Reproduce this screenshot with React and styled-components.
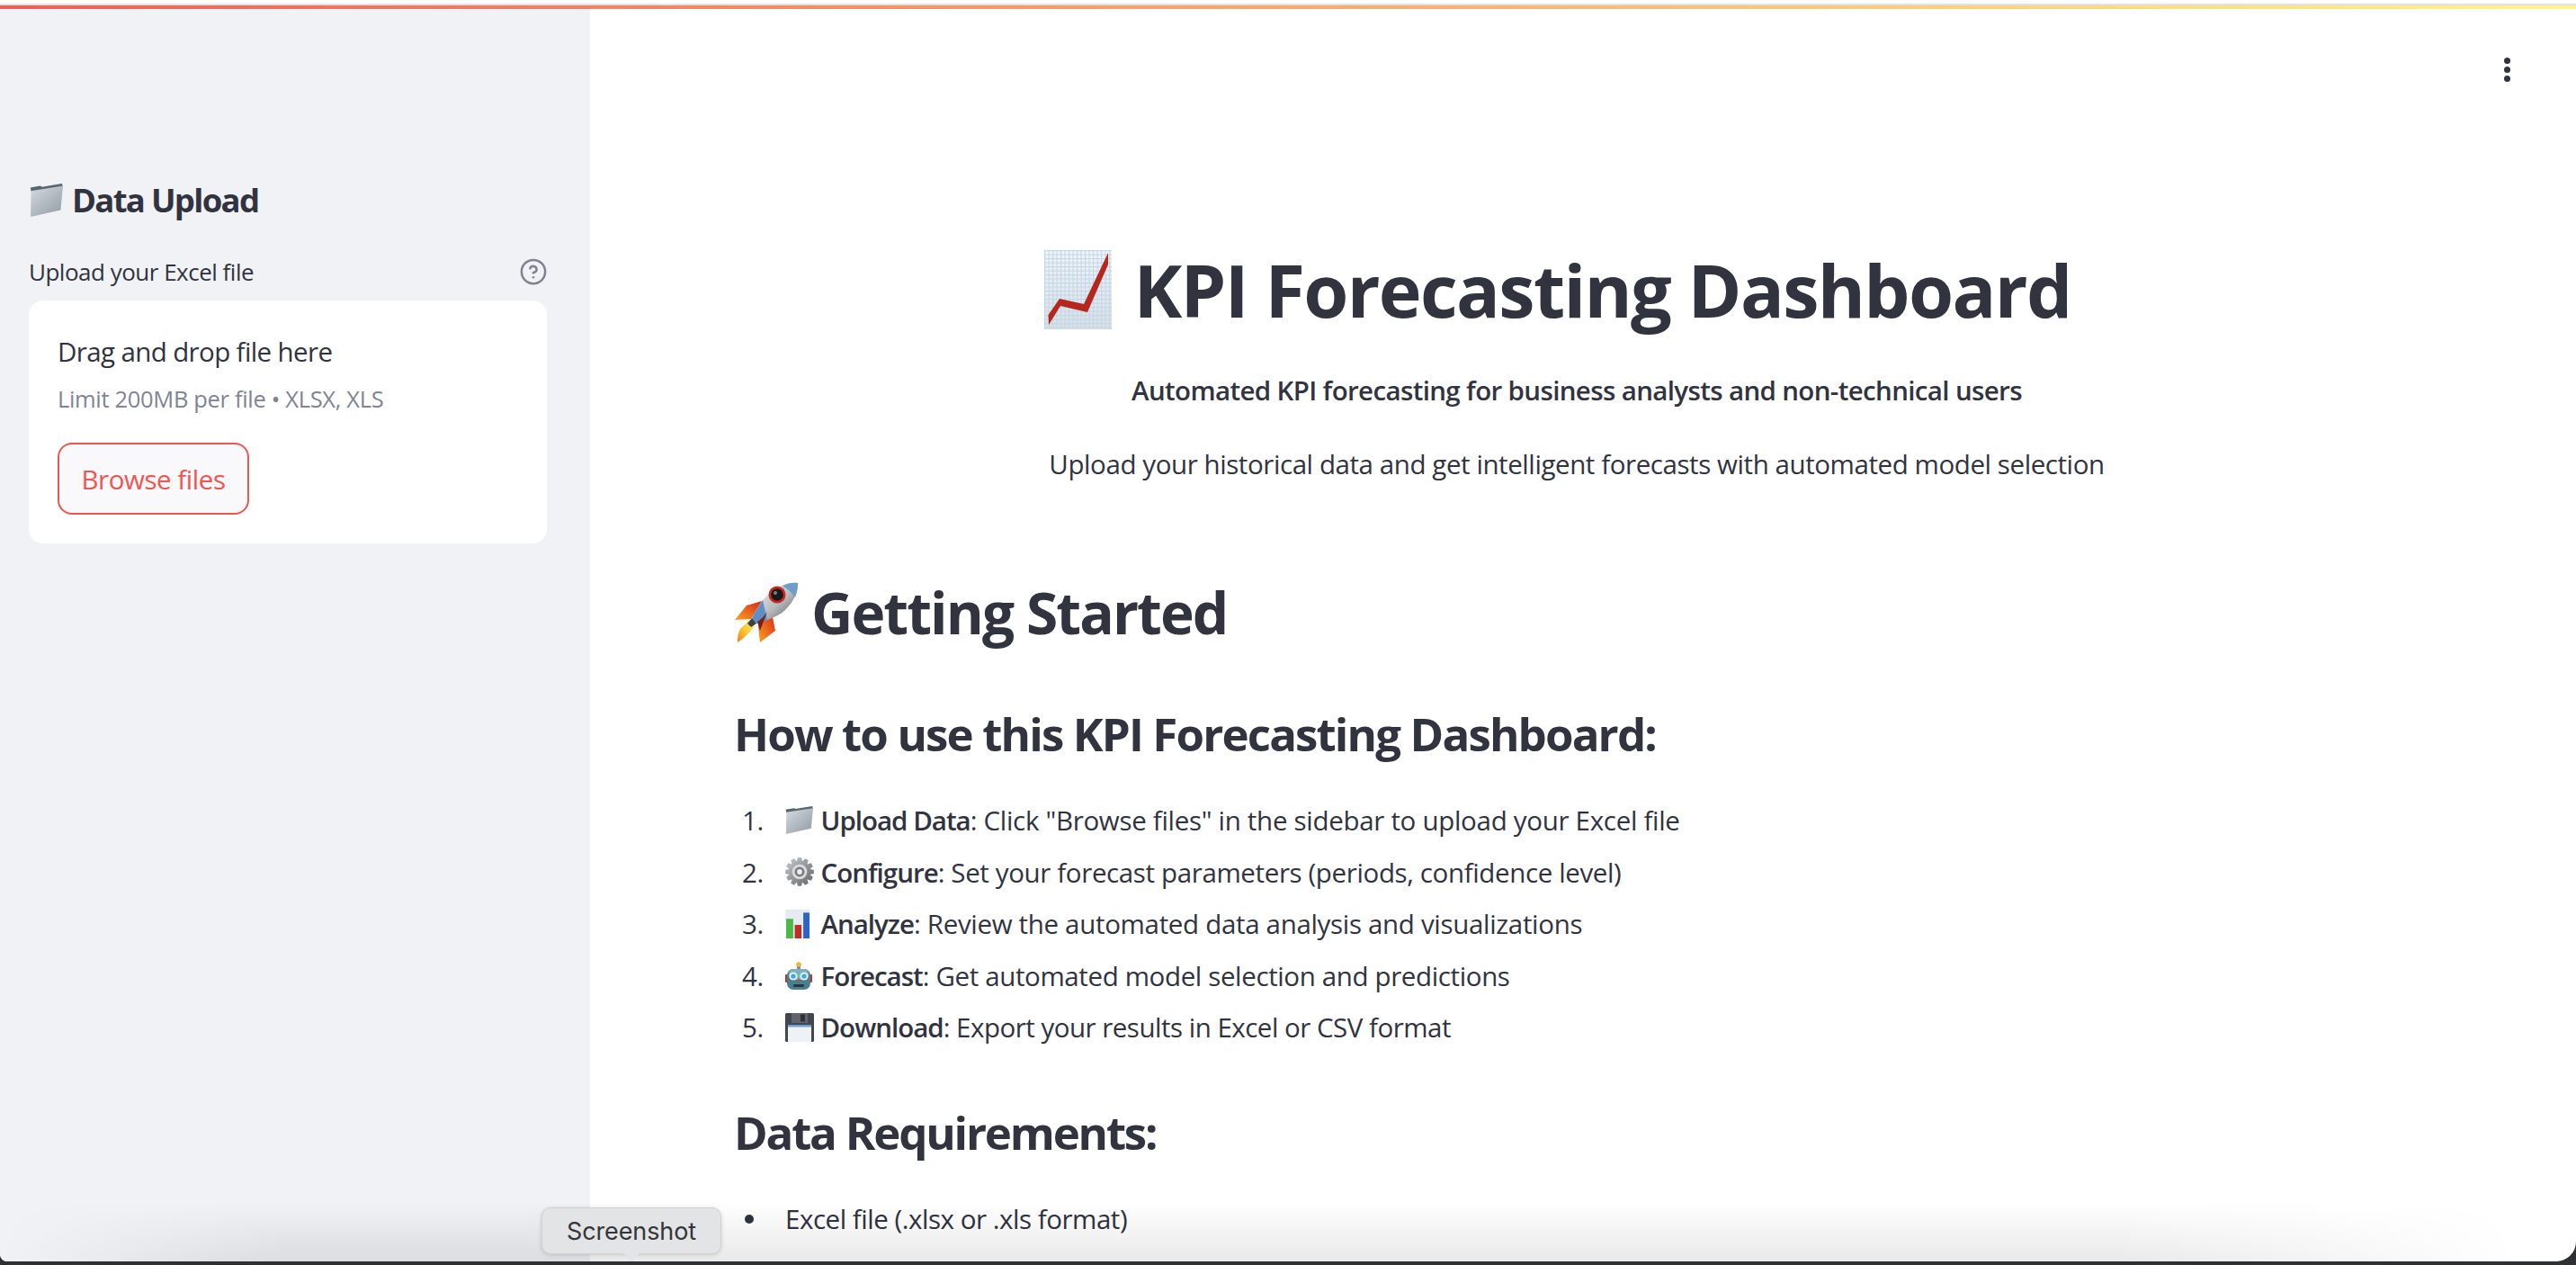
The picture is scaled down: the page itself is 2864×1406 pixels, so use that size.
import React from 'react';
import styled, { createGlobalStyle } from 'styled-components';

const Global = createGlobalStyle`
  html, body { margin: 0; padding: 0; height: 100%; background: #2f3034; overflow: hidden; }
  #root { height: 100%; }
  * { box-sizing: border-box; }
`;

const Screen = styled.div`
  position: relative; height: 1406px; width: 100%; background: #2f3034; overflow: hidden;
  font-family: "Open Sans", "Noto Sans", sans-serif; color: #31333f;
`;
const Frame = styled.div`
  position: relative; height: 1402px; background: #fff; overflow: hidden;
  border-bottom-right-radius: 22px; border-bottom-left-radius: 8px;
  display: flex; flex-direction: column;
`;
const TopEdge = styled.div`
  height: 6px; flex: none; background: #fff; border-bottom: 2px solid #e2e2e2;
`;
const Decoration = styled.div`
  height: 4px; flex: none;
  background: linear-gradient(90deg, #ee5f56, #f8a870 50%, #fff48c);
`;
const Body = styled.div`flex: 1; display: flex; min-height: 0;`;

const Sidebar = styled.aside`
  width: 656px; flex: none; background: #f0f2f6; padding: 187px 48px 0 32px;
`;
const SideHeading = styled.h2`
  margin: 0; display: flex; align-items: center; gap: 10px; height: 50px; padding-left: 1px;
  font-size: 36.5px; font-weight: 700; letter-spacing: -1.7px; line-height: 50px;
`;
const LabelRow = styled.div`
  margin-top: 40px; height: 30px; display: flex; justify-content: space-between; align-items: center;
`;
const Label = styled.label`font-size: 26px; letter-spacing: -0.5px; line-height: 30px;`;
const HelpIcon = styled.svg`width: 30px; height: 30px; color: #7f8391; display: block;`;
const DropZone = styled.section`
  margin-top: 17px; height: 270px; background: #fff; border-radius: 16px; padding: 37px 32px 0;
`;
const DropTitle = styled.div`font-size: 29.5px; letter-spacing: -0.62px; line-height: 40px;`;
const DropHint = styled.div`
  margin-top: 14px; font-size: 25.5px; letter-spacing: -0.33px; line-height: 36px; color: #808495;
`;
const BrowseButton = styled.button`
  margin-top: 31px; width: 213px; height: 80px; border: 2px solid #f1554f; border-radius: 16px;
  background: #f9f9fb; color: #f1554f; font: inherit; font-size: 29.5px; letter-spacing: -0.45px;
  display: flex; align-items: center; justify-content: center; padding: 0;
`;

const Main = styled.main`
  position: relative; flex: 1; min-width: 0; padding: 262px 174px 0 160px;
`;
const Dots = styled.div`
  position: absolute; top: 54px; left: 2128px; display: flex; flex-direction: column; gap: 3px;
`;
const Dot = styled.span`width: 7px; height: 7px; border-radius: 50%; background: #31333f;`;
const Title = styled.h1`
  margin: 0; height: 100px; display: flex; justify-content: center; align-items: center; gap: 24px;
  padding-right: 42px; font-size: 81px; font-weight: 700; letter-spacing: -1.65px; line-height: 100px;
  white-space: nowrap;
`;
const Lead = styled.p`
  margin: ${p => p.$bold ? 39.5 : 38}px 0 0; text-align: center; font-size: 29.5px; line-height: 44px;
  font-weight: ${p => p.$bold ? 600 : 400};
  letter-spacing: ${p => p.$bold ? '-0.64px' : '-0.42px'};
  white-space: nowrap;
`;
const SectionHeading = styled.h2`
  margin: 103px 0 0; height: 80px; display: flex; align-items: center; gap: 14px;
  font-size: 64px; font-weight: 700; letter-spacing: -1.9px; line-height: 80px;
`;
const SubHeading = styled.h3`
  margin: ${p => p.$top}px 0 0; height: 70px; font-size: 51px; font-weight: 700;
  letter-spacing: ${p => p.$ls}px; line-height: 70px; white-space: nowrap;
`;
const List = styled.ol`margin: 33.5px 0 0; padding: 0; list-style: none;`;
const Item = styled.li`
  height: 57.5px; display: flex; align-items: center; font-size: 29.5px;
  letter-spacing: ${p => p.$ls}px; white-space: nowrap;
`;
const Marker = styled.span`width: 57px; flex: none; padding-left: 9px;`;
const BulletDot = styled.span`
  width: 57px; flex: none; padding-left: 12px; display: flex;
  &::before { content: ""; width: 10px; height: 10px; border-radius: 50%; background: #31333f; }
`;
const EmojiSlot = styled.span`width: 39.5px; flex: none; display: flex; align-items: center;`;
const Strong = styled.strong`font-weight: 600; letter-spacing: -1px;`;

const Vignette = styled.div`
  position: absolute; left: 0; right: 0; bottom: 0; height: 66px; pointer-events: none;
  background: linear-gradient(180deg, rgba(0,0,0,0), rgba(0,0,0,.085));
  mask-image: linear-gradient(90deg, transparent 0, #000 320px, #000 2350px, transparent 2800px);
`;
const Tip = styled.div`
  position: absolute; left: 602px; top: 1342px; width: 200px; height: 52px; border-radius: 10px;
  background: #e3e4e5; border: 1px solid #cfd0d2; box-shadow: 0 1px 5px rgba(0,0,0,.14);
  display: flex; align-items: center; justify-content: center;
  font-family: Inter, sans-serif; font-size: 27px; letter-spacing: -0.1px; color: #33353a;
  &::after {
    content: ""; position: absolute; left: 90px; bottom: -9px; width: 0; height: 0;
    border-left: 9px solid transparent; border-right: 9px solid transparent; border-top: 9px solid #e3e4e5;
  }
`;
const EmojiSvg = styled.svg`display: block; flex: none; overflow: visible;`;

const ChartEmoji = () => (
  <EmojiSvg width="75" height="88" viewBox="0 0 75 88">
    <defs>
      <pattern id="chartGrid" width="4.5" height="4.5" patternUnits="userSpaceOnUse">
        <path d="M0 .5H4.5M.5 0V4.5" stroke="#c3d7e9" strokeWidth="1.3" fill="none" />
      </pattern>
      <linearGradient id="chartBg" x1="0" y1="0" x2="0" y2="1">
        <stop offset="0" stopColor="#f3f6f8" /><stop offset="1" stopColor="#d9dfe4" />
      </linearGradient>
    </defs>
    <rect width="75" height="88" fill="url(#chartBg)" />
    <rect width="75" height="88" fill="url(#chartGrid)" />
    <polygon points="4.5,72 17,54 44,60 71,3 71,16 48,69 18,62 5,83" fill="#b5261c" />
  </EmojiSvg>
);
const Rocket = () => (
  <EmojiSvg width="72" height="68" viewBox="0 0 72 68">
    <defs>
      <linearGradient id="rocketBody" x1="0.1" y1="0.1" x2="0.9" y2="0.9">
        <stop offset="0" stopColor="#e9ebec" /><stop offset=".55" stopColor="#b8bcbe" /><stop offset="1" stopColor="#5f6467" />
      </linearGradient>
      <linearGradient id="rocketFin" x1="1" y1="0" x2="0" y2="1">
        <stop offset="0" stopColor="#d8261a" /><stop offset="1" stopColor="#f9a31f" />
      </linearGradient>
      <linearGradient id="rocketFlame" x1="1" y1="0" x2="0" y2="1">
        <stop offset="0" stopColor="#fff27a" /><stop offset=".6" stopColor="#fbbf2a" /><stop offset="1" stopColor="#f0782a" />
      </linearGradient>
    </defs>
    <polygon points="31,21 14,26 1,42 19,41" fill="url(#rocketFin)" />
    <polygon points="42,34 46,54 29,67 27,49" fill="url(#rocketFin)" />
    <path d="M17,42 L23,49 C17,57 10,63 4,67 C4,60 5,55 7,52 C10,49 13,46 17,42Z" fill="url(#rocketFlame)" />
    <path d="M71,1 C60,-1 44,6 32,20 C28,26 24,32 20,40 L25,46 C32,44 44,40 52,35 C64,26 72,12 71,1Z" fill="url(#rocketBody)" />
    <path d="M71,1 C66,0 60,1 54,4 C59,7 65,12 68,17 C70,12 71,6 71,1Z" fill="#6f9ccb" />
    <path d="M32,20 C28,26 24,32 20,40 L25,46 C29,45 33,43.5 37,42Z" fill="#5f8fc4" />
    <polygon points="20,40 25,46 19,50 15,46" fill="#3b4148" />
    <path d="M26,44 C31,41 34,37 37,33 L29,54 Z" fill="#7a2218" />
    <circle cx="48" cy="14" r="9.5" fill="#c9281f" />
    <circle cx="48" cy="14" r="6.8" fill="#17191c" />
    <circle cx="46" cy="12" r="2" fill="#7c8084" />
  </EmojiSvg>
);
const Folder = ({ size, id }) => (
  <EmojiSvg width={size} height={size} viewBox="0 0 100 100">
    <defs>
      <linearGradient id={id} x1="0" y1="0" x2="0.9" y2="1">
        <stop offset="0" stopColor="#d6dbdf" /><stop offset="1" stopColor="#929da6" />
      </linearGradient>
    </defs>
    <polygon points="2,12 32,7 37,10 97,0 100,10 5,26" fill="#59656f" />
    <polygon points="4,22 100,7 93,80 3,100" fill={`url(#${id})`} />
  </EmojiSvg>
);
const gearPath = (() => {
  const pts = [];
  const n = 12;
  for (let i = 0; i < n; i++) {
    const a = (i / n) * Math.PI * 2;
    const w = Math.PI / n;
    [[a - w * .95, 38], [a - w * .5, 50], [a + w * .5, 50], [a + w * .95, 38]].forEach(([t, r]) =>
      pts.push(`${(50 + r * Math.cos(t)).toFixed(1)},${(50 + r * Math.sin(t)).toFixed(1)}`));
  }
  return pts.join(' ');
})();
const Gear = () => (
  <EmojiSvg width="32" height="32" viewBox="0 0 100 100">
    <defs>
      <linearGradient id="gearFill" x1="0" y1="0" x2="1" y2="1">
        <stop offset="0" stopColor="#c9cbcd" /><stop offset="1" stopColor="#5f6366" />
      </linearGradient>
    </defs>
    <polygon points={gearPath} fill="url(#gearFill)" />
    <circle cx="50" cy="50" r="26" fill="#d8dadb" />
    <circle cx="50" cy="50" r="17" fill="#77797b" />
    <circle cx="50" cy="50" r="9" fill="#eceded" />
  </EmojiSvg>
);
const Bars = () => (
  <EmojiSvg width="28" height="32" viewBox="0 0 80 94">
    <rect width="80" height="94" fill="#e6ebf1" />
    <rect x="2" y="30" width="23" height="64" fill="#4cb848" />
    <rect x="30" y="50" width="22" height="44" fill="#bd2f24" />
    <rect x="58" y="10" width="20" height="84" fill="#2b62c6" />
  </EmojiSvg>
);
const Robot = () => (
  <EmojiSvg width="30" height="31" viewBox="0 0 30 31">
    <rect x="0" y="14" width="3" height="9" rx="1" fill="#b5392e" />
    <rect x="27" y="14" width="3" height="9" rx="1" fill="#b5392e" />
    <rect x="13" y="4" width="4" height="5" fill="#8d7fa8" />
    <circle cx="15" cy="3" r="2.8" fill="#f2b233" />
    <rect x="2" y="8" width="26" height="23" rx="7" fill="#4c7f8d" />
    <rect x="4" y="8" width="22" height="12" rx="5" fill="#7fb0bb" />
    <circle cx="9" cy="16" r="4.6" fill="#d9f0f7" /><circle cx="9" cy="16" r="2.6" fill="#4aa3d6" />
    <circle cx="21" cy="16" r="4.6" fill="#d9f0f7" /><circle cx="21" cy="16" r="2.6" fill="#4aa3d6" />
    <polygon points="15,18 17,22 13,22" fill="#c9453a" />
    <rect x="9" y="25" width="12" height="3" rx="1" fill="#233b44" />
  </EmojiSvg>
);
const Floppy = () => (
  <EmojiSvg width="32" height="32" viewBox="0 0 32 32">
    <path d="M0 1.5 A1.5 1.5 0 0 1 1.5 0 H30.5 A1.5 1.5 0 0 1 32 1.5 V30.5 A1.5 1.5 0 0 1 30.5 32 H1.5 A1.5 1.5 0 0 1 0 30.5Z" fill="#43464d" />
    <rect x="7" y="0" width="18" height="11" fill="#60646c" />
    <rect x="17" y="1.5" width="5" height="8" fill="#2e3036" />
    <rect x="3" y="13" width="26" height="19" fill="#eef1f5" />
    <rect x="3" y="13" width="26" height="2.5" fill="#6fa0d8" />
  </EmojiSvg>
);

const steps = [
  [<Folder size={31} id="folderList" />, 'Upload Data', ': Click "Browse files" in the sidebar to upload your Excel file', -0.3],
  [<Gear />, 'Configure', ': Set your forecast parameters (periods, confidence level)', -0.37],
  [<Bars />, 'Analyze', ': Review the automated data analysis and visualizations', -0.32],
  [<Robot />, 'Forecast', ': Get automated model selection and predictions', -0.37],
  [<Floppy />, 'Download', ': Export your results in Excel or CSV format', -0.5],
];
const requirements = [['Excel file (.xlsx or .xls format)', -0.47], ['At least one date/time column', -0.45]];

export default function App() {
  return (
    <Screen>
      <Global />
      <Frame>
        <TopEdge />
        <Decoration />
        <Body>
          <Sidebar>
            <SideHeading><Folder size={37} id="folderSide" />Data Upload</SideHeading>
            <LabelRow>
              <Label>Upload your Excel file</Label>
              <HelpIcon viewBox="0 0 24 24" fill="none" stroke="currentColor" strokeWidth="2" strokeLinecap="round" strokeLinejoin="round">
                <circle cx="12" cy="12" r="10.5" />
                <path d="M9.1 9a3 3 0 0 1 5.8 1c0 2-3 3-3 3" />
                <path d="M12 17h.01" />
              </HelpIcon>
            </LabelRow>
            <DropZone>
              <DropTitle>Drag and drop file here</DropTitle>
              <DropHint>Limit 200MB per file • XLSX, XLS</DropHint>
              <BrowseButton>Browse files</BrowseButton>
            </DropZone>
          </Sidebar>
          <Main>
            <Dots><Dot /><Dot /><Dot /></Dots>
            <Title><ChartEmoji />KPI Forecasting Dashboard</Title>
            <Lead $bold>Automated KPI forecasting for business analysts and non-technical users</Lead>
            <Lead>Upload your historical data and get intelligent forecasts with automated model selection</Lead>
            <SectionHeading><Rocket />Getting Started</SectionHeading>
            <SubHeading $top={59} $ls={-1.86}>How to use this KPI Forecasting Dashboard:</SubHeading>
            <List>
              {steps.map(([icon, name, rest, ls], i) => (
                <Item key={name} $ls={ls}>
                  <Marker>{i + 1}.</Marker>
                  <EmojiSlot>{icon}</EmojiSlot>
                  <span><Strong>{name}</Strong>{rest}</span>
                </Item>
              ))}
            </List>
            <SubHeading $top={52} $ls={-2.2}>Data Requirements:</SubHeading>
            <List as="ul">
              {requirements.map(([r, ls]) => (
                <Item key={r} $ls={ls}><BulletDot /><span>{r}</span></Item>
              ))}
            </List>
          </Main>
        </Body>
        <Vignette />
      </Frame>
      <Tip>Screenshot</Tip>
    </Screen>
  );
}
